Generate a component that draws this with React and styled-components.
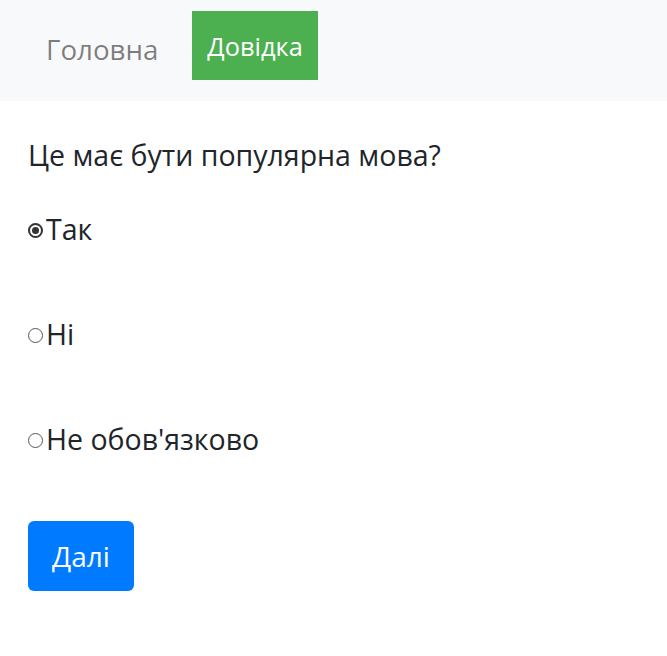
import React, { useState } from "react";
import styled, { createGlobalStyle } from "styled-components";

const Global = createGlobalStyle`
  html, body { margin: 0; padding: 0; background: #fff; }
  body { font-family: "Open Sans", "Noto Sans", sans-serif; color: #212529; }
  * { box-sizing: border-box; }
`;

const Nav = styled.nav`
  background: #f8f9fa;
  height: 101px;
  display: flex;
  align-items: flex-start;
  padding: 11px 0 0 30px;
  gap: 18px;
`;

const NavLink = styled.a`
  display: flex;
  align-items: center;
  height: 69px;
  padding: ${(p) => (p.$active ? "0 15px" : "6px 16px 0")};
  font-size: ${(p) => (p.$active ? "25.4px" : "27.7px")};
  color: ${(p) => (p.$active ? "#fff" : "rgba(0,0,0,0.5)")};
  background: ${(p) => (p.$active ? "#4caf50" : "transparent")};
  text-decoration: none;
`;

const Main = styled.main`
  padding: 33px 28px 28px;
`;

const Question = styled.p`
  margin: 0 0 31px;
  font-size: 28.5px;
  line-height: 43px;
`;

const Options = styled.div`
  display: flex;
  flex-direction: column;
  gap: 63px;
`;

const Option = styled.label`
  display: flex;
  align-items: center;
  font-size: 28.5px;
  line-height: 42px;
  cursor: pointer;
`;

const Radio = styled.input.attrs({ type: "radio" })`
  appearance: none;
  flex-shrink: 0;
  width: 15px;
  height: 15px;
  margin: 3px 3px 0 0;
  border: 1px solid #555;
  border-radius: 50%;
  display: grid;
  place-items: center;
  &:checked {
    border: 2px solid #333;
  }
  &:checked::after {
    content: "";
    width: 7px;
    height: 7px;
    border-radius: 50%;
    background: #333;
  }
`;

const NextButton = styled.button`
  display: block;
  margin-top: 61px;
  width: 106px;
  height: 70px;
  border: none;
  border-radius: 6px;
  background: #007bff;
  color: #fff;
  font-family: inherit;
  font-size: 28px;
`;

const options = ["Так", "Ні", "Не обов'язково"];

export default function App() {
  const [val, setVal] = useState("Так");
  return (
    <>
      <Global />
      <Nav>
        <NavLink href="#">Головна</NavLink>
        <NavLink href="#" $active>Довідка</NavLink>
      </Nav>
      <Main>
        <Question>Це має бути популярна мова?</Question>
        <Options>
          {options.map((o) => (
            <Option key={o}>
              <Radio name="q" checked={val === o} onChange={() => setVal(o)} />
              {o}
            </Option>
          ))}
        </Options>
        <NextButton>Далі</NextButton>
      </Main>
    </>
  );
}
